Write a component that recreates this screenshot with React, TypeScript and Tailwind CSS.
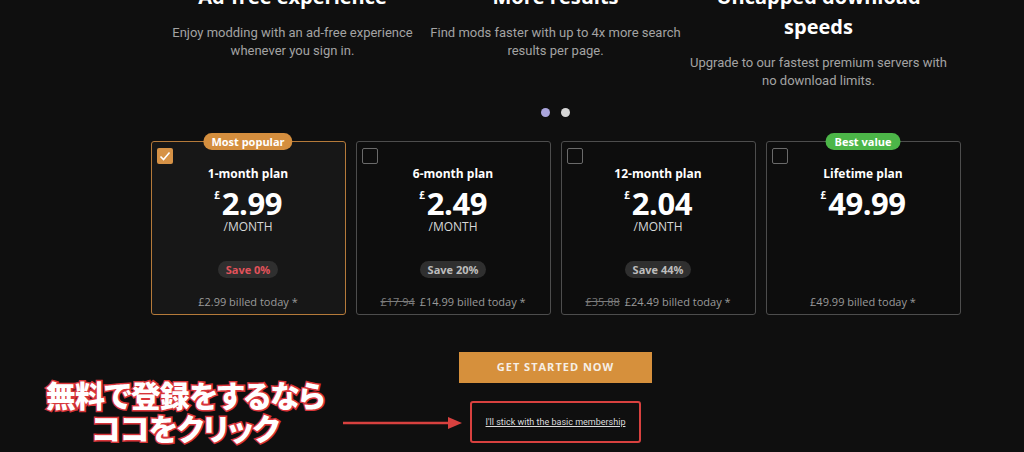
import React from "react";

const features = [
  {
    title: ["Ad-free experience"],
    desc: ["Enjoy modding with an ad-free experience", "whenever you sign in."],
  },
  {
    title: ["More results"],
    desc: ["Find mods faster with up to 4x more search", "results per page."],
  },
  {
    title: ["Uncapped download", "speeds"],
    desc: ["Upgrade to our fastest premium servers with", "no download limits."],
  },
];

type Plan = {
  name: string;
  price: string;
  perMonth: boolean;
  save?: string;
  old?: string;
  billed: string;
  selected?: boolean;
  badge?: "popular" | "value";
};

const plans: Plan[] = [
  { name: "1-month plan", price: "2.99", perMonth: true, save: "Save 0%", billed: "£2.99 billed today *", selected: true, badge: "popular" },
  { name: "6-month plan", price: "2.49", perMonth: true, save: "Save 20%", old: "£17.94", billed: "£14.99 billed today *" },
  { name: "12-month plan", price: "2.04", perMonth: true, save: "Save 44%", old: "£35.88", billed: "£24.49 billed today *" },
  { name: "Lifetime plan", price: "49.99", perMonth: false, billed: "£49.99 billed today *", badge: "value" },
];

function Chevron({ dir }: { dir: "left" | "right" }) {
  return (
    <svg width="10" height="16" viewBox="0 0 10 16" className="mt-[-4px]">
      <path
        d={dir === "left" ? "M8 1 L2 8 L8 15" : "M2 1 L8 8 L2 15"}
        fill="none"
        stroke="#6b6b6b"
        strokeWidth="1.5"
        strokeLinecap="round"
      />
    </svg>
  );
}

function PlanCard({ plan }: { plan: Plan }) {
  return (
    <div
      className={`relative flex h-[174px] w-[195px] flex-col rounded-[3px] border px-[5px] pt-[6px] pb-[5px] ${
        plan.selected ? "border-[#b57a3a] bg-[#171717]" : "border-[#4d4d4d] bg-[#0d0d0d]"
      }`}
    >
      {plan.badge === "popular" && (
        <div className="absolute left-1/2 top-[-9px] -translate-x-1/2 rounded-full bg-[#d48e3e] px-[8px] text-[11px] font-bold leading-[17px] text-white">
          Most popular
        </div>
      )}
      {plan.badge === "value" && (
        <div className="absolute left-1/2 top-[-9px] -translate-x-1/2 rounded-full bg-[#4cb648] px-[9px] text-[11px] font-bold leading-[17px] text-white">
          Best value
        </div>
      )}
      {plan.selected ? (
        <div className="flex h-[16px] w-[16px] items-center justify-center rounded-[2px] bg-[#d69246]">
          <svg width="12" height="12" viewBox="0 0 12 12">
            <path d="M1.5 6.5 L4.5 9.5 L10.5 2.5" fill="none" stroke="#fff" strokeWidth="1.6" />
          </svg>
        </div>
      ) : (
        <div className="h-[16px] w-[16px] rounded-[2px] border border-[#6a6a6a]" />
      )}
      <div className="mt-[2px] text-center text-[12px] font-bold leading-[16px] text-white">{plan.name}</div>
      <div className="mt-[6px] flex justify-center">
        <span className="mr-[2px] mt-[1px] text-[10px] font-bold leading-[12px] text-white">£</span>
        <span className="text-[31px] font-bold leading-[30px] tracking-[-0.5px] text-white">{plan.price}</span>
      </div>
      {plan.perMonth && (
        <div className="mt-[1px] text-center text-[12px] leading-[16px] text-[#d8d8d8]">/MONTH</div>
      )}
      <div className="mt-auto flex flex-col items-center">
        {plan.save && (
          <div
            className={`rounded-full bg-[#2f2f2f] px-[8px] text-[11px] font-bold leading-[17px] ${
              plan.selected ? "text-[#e2525a]" : "text-[#bdbdbd]"
            }`}
          >
            {plan.save}
          </div>
        )}
        <div className="mt-[17px] text-[11px] leading-[14px] text-[#9a9a9a]">
          {plan.old && <span className="mr-[5px] line-through text-[#7c7c7c]">{plan.old}</span>}
          {plan.billed}
        </div>
      </div>
    </div>
  );
}

export default function App() {
  return (
    <div className="relative h-[452px] w-[1024px] overflow-hidden bg-[#0f0f0f] font-['Open_Sans',sans-serif]">
      <div className="ml-[131px] flex w-[849px] flex-col items-center">
        {/* Carousel */}
        <div className="-mt-[18px] flex w-full items-start justify-between px-[8px]">
          <Chevron dir="left" />
          <div className="grid w-[789px] grid-cols-3">
            {features.map((f) => (
              <div key={f.title[0]} className="flex flex-col items-center text-center">
                <div className="text-[20px] font-bold leading-[30px] text-white">
                  {f.title.map((t) => (
                    <div key={t}>{t}</div>
                  ))}
                </div>
                <div className="mt-[12px] font-['Roboto',sans-serif] text-[13px] leading-[18px] text-[#a3a3a3]">
                  {f.desc.map((d) => (
                    <div key={d}>{d}</div>
                  ))}
                </div>
              </div>
            ))}
          </div>
          <Chevron dir="right" />
        </div>

        <div className="mt-[18px] flex gap-[11px]">
          <div className="h-[9px] w-[9px] rounded-full bg-[#aaa5dc]" />
          <div className="h-[9px] w-[9px] rounded-full bg-[#d6d6d6]" />
        </div>

        {/* Plans */}
        <div className="mt-[24px] flex gap-[10px]">
          {plans.map((p) => (
            <PlanCard key={p.name} plan={p} />
          ))}
        </div>

        <button className="mt-[37px] h-[31px] w-[193px] bg-[#d6903c] text-[11px] font-bold tracking-[1px] text-[#f6efe6]">
          GET STARTED NOW
        </button>

        <div className="mt-[18px] flex h-[42px] w-[171px] items-center justify-center rounded-[3px] border-2 border-[#d8413f]">
          <a href="#" className="font-['Roboto',sans-serif] text-[9px] leading-[12px] text-[#dcdcdc] underline">
            I'll stick with the basic membership
          </a>
        </div>
      </div>

      {/* Annotation */}
      <div className="absolute left-[20px] top-[378px] w-[330px] text-center font-['Noto_Sans_CJK_JP',sans-serif] text-[30px] font-black leading-[33px] tracking-[-0.8px] text-white [font-feature-settings:'palt'] [paint-order:stroke_fill] [-webkit-text-stroke:3px_#d8353a]">
        <div>無料で登録をするなら</div>
        <div>ココをクリック</div>
      </div>
      <svg className="absolute left-[340px] top-[414px]" width="126" height="18" viewBox="0 0 126 18">
        <line x1="3" y1="9" x2="112" y2="9" stroke="#d8413f" strokeWidth="2.5" />
        <path d="M108 3 L122 9 L108 15 Z" fill="#d8413f" />
      </svg>
    </div>
  );
}
